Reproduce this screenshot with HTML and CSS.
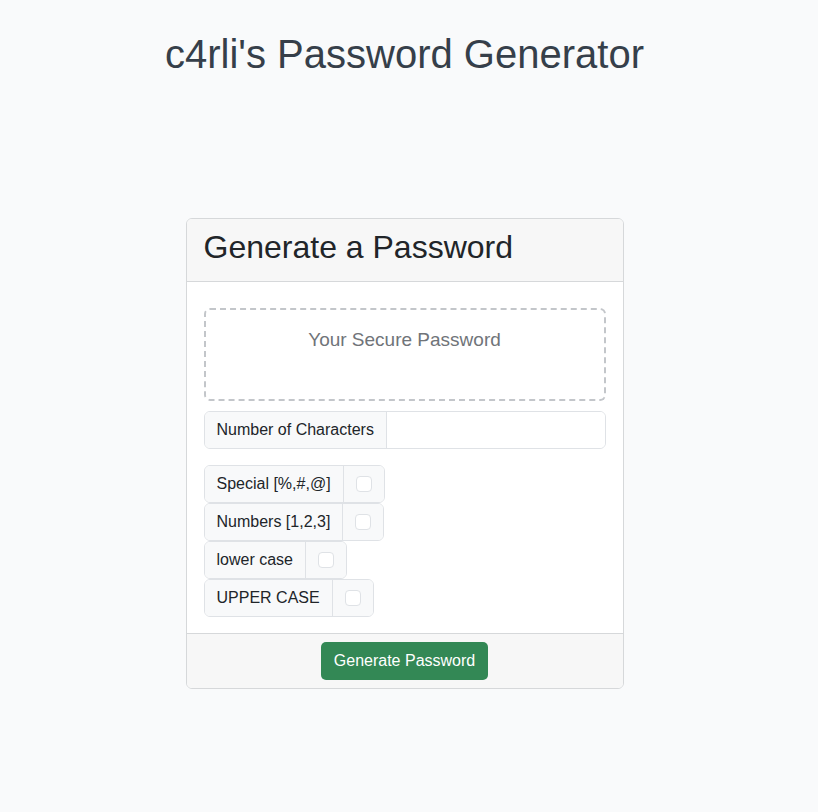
FILE: index.html
```html
<!DOCTYPE html>
<html>
<head>
<meta charset="utf-8">
<link rel="stylesheet" href="styles.css">
</head>
<body>
<main class="page">
  <h1 class="title">c4rli's Password Generator</h1>
  <section class="card">
    <header class="card-header">
      <h2 class="card-title">Generate a Password</h2>
    </header>
    <div class="card-body">
      <div class="password-box">Your Secure Password</div>
      <div class="input-group wide">
        <span class="label">Number of Characters</span>
        <span class="field"></span>
      </div>
      <div class="options">
        <div class="input-group">
          <span class="label">Special [%,#,@]</span>
          <span class="check"><span class="box"></span></span>
        </div>
        <div class="input-group">
          <span class="label">Numbers [1,2,3]</span>
          <span class="check"><span class="box"></span></span>
        </div>
        <div class="input-group">
          <span class="label">lower case</span>
          <span class="check"><span class="box"></span></span>
        </div>
        <div class="input-group">
          <span class="label">UPPER CASE</span>
          <span class="check"><span class="box"></span></span>
        </div>
      </div>
    </div>
    <footer class="card-footer">
      <button class="btn">Generate Password</button>
    </footer>
  </section>
</main>
</body>
</html>
```
FILE: styles.css
```css
* { box-sizing: border-box; }
html, body { margin: 0; padding: 0; }
body {
  background: #f9fafb;
  font-family: "Liberation Sans", Arial, sans-serif;
  color: #212529;
}
.page {
  width: 809px;
  display: flex;
  flex-direction: column;
  align-items: center;
}
.title {
  margin: 30px 0 0;
  font-size: 40px;
  font-weight: 400;
  line-height: 48px;
  color: #363f4a;
}
.card {
  margin-top: 140px;
  width: 438px;
  background: #fff;
  border: 1px solid #d6d8da;
  border-radius: 6px;
  overflow: hidden;
}
.card-header {
  background: #f7f7f7;
  border-bottom: 1px solid #d6d8da;
  height: 63px;
  padding: 9px 17px 0;
}
.card-title {
  margin: 0;
  font-size: 32px;
  font-weight: 400;
  line-height: 38px;
  color: #212529;
}
.card-body {
  padding: 26px 17px 16px;
}
.password-box {
  height: 93px;
  border: 2px dashed #c3c6ca;
  border-radius: 6px;
  text-align: center;
  padding-top: 19px;
  font-size: 19px;
  color: #707479;
}
.input-group {
  display: inline-flex;
  height: 38px;
  border: 1px solid #dfe2e6;
  border-radius: 6px;
  overflow: hidden;
  font-size: 16px;
}
.input-group.wide {
  display: flex;
  margin-top: 10px;
  width: 100%;
}
.label {
  display: flex;
  align-items: center;
  padding: 0 12px;
  background: #f8f9fa;
  white-space: nowrap;
}
.field {
  flex: 1;
  background: #fff;
  border-left: 1px solid #dfe2e6;
}
.options {
  margin-top: 16px;
  display: flex;
  flex-direction: column;
  align-items: flex-start;
}
.check {
  display: flex;
  align-items: center;
  justify-content: center;
  width: 41px;
  background: #f8f9fa;
  border-left: 1px solid #dfe2e6;
}
.box {
  width: 16px;
  height: 16px;
  border: 1px solid #dfe2e6;
  border-radius: 4px;
  background: #fff;
}
.card-footer {
  background: #f7f7f7;
  border-top: 1px solid #d6d8da;
  height: 55px;
  display: flex;
  justify-content: center;
  padding-top: 8px;
}
.btn {
  height: 38px;
  padding: 0 13px;
  border: none;
  border-radius: 5px;
  background: #338855;
  color: #fff;
  font-family: "Liberation Sans", Arial, sans-serif;
  font-size: 16px;
}
```
